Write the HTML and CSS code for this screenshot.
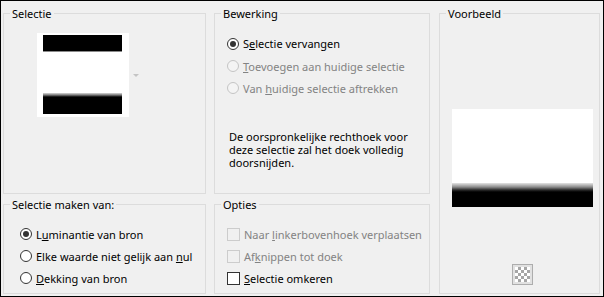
FILE: index.html
```html
<!DOCTYPE html>
<html lang="nl">
<head>
    <meta charset="UTF-8">
    <title>Selectie uit masker</title>
    <link rel="stylesheet" href="styles.css">
</head>
<body>
    <div class="dialog">
        <div class="group group-selectie">
            <span class="group-title">Selectie</span>
            <div class="thumb-row">
                <div class="thumb">
                    <div class="thumb-mask"></div>
                </div>
                <span class="drop-arrow"></span>
            </div>
        </div>

        <div class="group group-bewerking">
            <span class="group-title">Bewerking</span>
            <div class="options">
                <div class="option first">
                    <span class="radio checked"></span>
                    <span>S<u>e</u>lectie vervangen</span>
                </div>
                <div class="option disabled">
                    <span class="radio"></span>
                    <span><u>T</u>oevoegen aan huidige selectie</span>
                </div>
                <div class="option disabled">
                    <span class="radio"></span>
                    <span>Van <u>h</u>uidige selectie aftrekken</span>
                </div>
            </div>
            <p class="note">De oorspronkelijke rechthoek voor<br>deze selectie zal het doek volledig<br>doorsnijden.</p>
        </div>

        <div class="group group-voorbeeld">
            <span class="group-title">Voorbeeld</span>
            <div class="preview"></div>
            <button class="checker-btn" type="button"><span class="checker"></span></button>
        </div>

        <div class="group group-bron">
            <span class="group-title">Selectie maken van:</span>
            <div class="options">
                <div class="option">
                    <span class="radio checked"></span>
                    <span>L<u>u</u>minantie van bron</span>
                </div>
                <div class="option">
                    <span class="radio"></span>
                    <span>Elke waarde niet gelijk aan <u>n</u>ul</span>
                </div>
                <div class="option">
                    <span class="radio"></span>
                    <span><u>D</u>ekking van bron</span>
                </div>
            </div>
        </div>

        <div class="group group-opties">
            <span class="group-title">Opties</span>
            <div class="options">
                <div class="option disabled">
                    <span class="check"></span>
                    <span>Naar <u>l</u>inkerbovenhoek verplaatsen</span>
                </div>
                <div class="option disabled">
                    <span class="check"></span>
                    <span>Af<u>k</u>nippen tot doek</span>
                </div>
                <div class="option">
                    <span class="check"></span>
                    <span><u>S</u>electie omkeren</span>
                </div>
            </div>
        </div>
    </div>
</body>
</html>
```

FILE: styles.css
```css
* {
    margin: 0;
    padding: 0;
    box-sizing: border-box;
}

body {
    font-family: 'Noto Sans', 'DejaVu Sans', sans-serif;
    font-size: 11px;
    color: #000;
    background: #f0f0f0;
}

.dialog {
    width: 604px;
    height: 297px;
    border: 1px solid #000;
    background: #f0f0f0;
    padding: 12px 2px 2px 2px;
    display: grid;
    grid-template-columns: 203px 216px 162px;
    grid-template-rows: 181px 90px;
    column-gap: 8px;
    row-gap: 10px;
}

.group-voorbeeld {
    grid-column: 3;
    grid-row: 1 / span 2;
    margin-left: 1px;
}

.group-bron {
    grid-column: 1;
    grid-row: 2;
}

.group-opties {
    grid-column: 2;
    grid-row: 2;
}

.group {
    border: 1px solid #dcdcdc;
    display: flex;
    flex-direction: column;
}

.group-title {
    display: block;
    align-self: flex-start;
    height: 15px;
    line-height: 15px;
    margin: -8px 0 0 6px;
    padding: 0 2px;
    background: #f0f0f0;
}

/* Selectie */
.thumb-row {
    display: flex;
    align-items: center;
    margin: 12px 0 0 33px;
}

.thumb {
    width: 92px;
    height: 84px;
    background: #fff;
    padding: 2px 6px 3px 6px;
}

.thumb-mask {
    width: 79px;
    height: 79px;
    background: linear-gradient(to bottom,
        #000 0, #000 16px,
        #8a8a8a 16px, #8a8a8a 17px,
        #fff 17px, #fff 58px,
        #d8d8d8 58px, #7a7a7a 60px, #000 62px, #000 100%);
}

.drop-arrow {
    width: 0;
    height: 0;
    margin-left: 4px;
    border-left: 3px solid transparent;
    border-right: 3px solid transparent;
    border-top: 3px solid #c4c4c4;
}

/* Keuzerondjes en vinkjes */
.options {
    display: flex;
    flex-direction: column;
    margin-top: 11px;
    padding-left: 12px;
}

.group-bron .options {
    padding-left: 16px;
}

.option {
    display: flex;
    align-items: center;
    height: 22px;
    white-space: nowrap;
}

.option.first {
    height: 23px;
}

.option.disabled {
    color: #838383;
}

.radio {
    width: 12px;
    height: 12px;
    border: 1px solid #333;
    border-radius: 50%;
    background: #fff;
    margin-right: 4px;
    flex-shrink: 0;
    display: flex;
    align-items: center;
    justify-content: center;
}

.radio.checked::after {
    content: '';
    width: 6px;
    height: 6px;
    border-radius: 50%;
    background: #333;
}

.disabled .radio {
    border-color: #c4c4c4;
    background: #f4f4f4;
}

.check {
    width: 13px;
    height: 13px;
    border: 1px solid #333;
    background: #fff;
    margin-right: 4px;
    flex-shrink: 0;
}

.disabled .check {
    border-color: #cccccc;
    background: #f0f0f0;
}

.note {
    margin: 31px 0 0 14px;
    line-height: 13px;
}

/* Voorbeeld */
.preview {
    width: 141px;
    height: 98px;
    margin: 88px 0 0 12px;
    background: linear-gradient(to bottom,
        #fff 0, #fff 74px,
        #e4e4e4 74px, #8c8c8c 78px, #2a2a2a 81px, #000 83px, #000 100%);
}

.checker-btn {
    width: 21px;
    height: 21px;
    margin: auto 0 8px 72px;
    border: 1px solid #adadad;
    background: #e1e1e1;
    display: flex;
    align-items: center;
    justify-content: center;
}

.checker {
    width: 15px;
    height: 15px;
    background: repeating-conic-gradient(#a6a6a6 0 25%, #fff 0 50%) 0 0 / 6px 6px;
}
```
